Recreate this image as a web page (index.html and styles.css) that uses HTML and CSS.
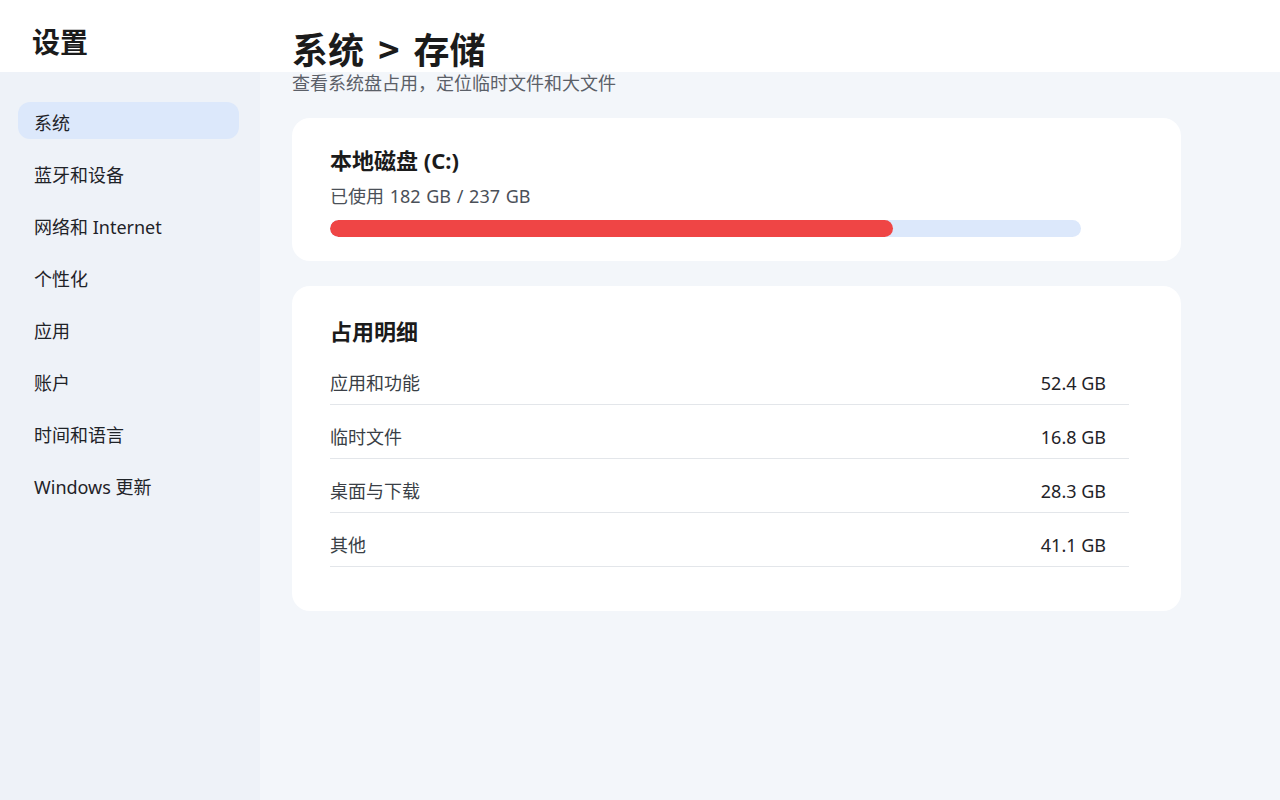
FILE: index.html
```html
<!DOCTYPE html>
<html lang="zh-CN">
<head>
<meta charset="utf-8">
<title>设置</title>
<link rel="stylesheet" href="styles.css">
</head>
<body>
<header class="topbar">
  <div class="brand">设置</div>
  <h1 class="page-title">系统 &gt; 存储</h1>
</header>
<div class="layout">
  <nav class="sidebar">
    <a class="nav-item active">系统</a>
    <a class="nav-item">蓝牙和设备</a>
    <a class="nav-item">网络和 Internet</a>
    <a class="nav-item">个性化</a>
    <a class="nav-item">应用</a>
    <a class="nav-item">账户</a>
    <a class="nav-item">时间和语言</a>
    <a class="nav-item">Windows 更新</a>
  </nav>
  <main class="main">
    <p class="subtitle">查看系统盘占用，定位临时文件和大文件</p>
    <section class="card disk-card">
      <h2 class="card-title">本地磁盘 (C:)</h2>
      <div class="usage">已使用 182 GB / 237 GB</div>
      <div class="track"><div class="fill" style="width:75%"></div></div>
    </section>
    <section class="card detail-card">
      <h2 class="card-title">占用明细</h2>
      <ul class="rows">
        <li class="row"><span class="label">应用和功能</span><span class="value">52.4 GB</span></li>
        <li class="row"><span class="label">临时文件</span><span class="value">16.8 GB</span></li>
        <li class="row"><span class="label">桌面与下载</span><span class="value">28.3 GB</span></li>
        <li class="row"><span class="label">其他</span><span class="value">41.1 GB</span></li>
      </ul>
    </section>
  </main>
</div>
</body>
</html>
```
FILE: styles.css
```css
* { box-sizing: border-box; }
html, body { margin: 0; padding: 0; height: 100%; }
body {
  font-family: "Noto Sans", "Noto Sans CJK SC", sans-serif;
  color: #1b1b1b;
  background: #f3f6fa;
  overflow: hidden;
}
.topbar {
  height: 72px;
  background: #ffffff;
  display: flex;
  align-items: flex-start;
}
.brand {
  width: 260px;
  padding-left: 32px;
  padding-top: 21px;
  font-family: "Noto Sans CJK SC", sans-serif;
  font-size: 28px;
  font-weight: 700;
  line-height: 40px;
}
.page-title {
  margin: 0 0 0 32px;
  padding-top: 28px;
  font-family: "Noto Sans CJK SC", sans-serif;
  font-size: 36px;
  font-weight: 700;
  line-height: 40px;
  word-spacing: 6px;
}
.layout {
  display: flex;
  height: calc(100% - 72px);
}
.sidebar {
  width: 260px;
  flex: none;
  background: #eef2f8;
  padding: 30px 21px 0 18px;
  display: flex;
  flex-direction: column;
  gap: 15px;
}
.nav-item {
  display: block;
  height: 37px;
  line-height: 43px;
  padding: 0 16px;
  border-radius: 12px;
  font-size: 18px;
  color: #1f2328;
}
.nav-item.active { background: #dce8fb; }
.main {
  flex: 1;
  padding: 0 32px;
  background: #f3f6fa;
}
.subtitle {
  margin: 0;
  font-size: 18px;
  line-height: 20px;
  height: 22px;
  color: #5b6068;
  font-family: "Noto Sans CJK SC", sans-serif;
}
.card {
  width: 889px;
  background: #ffffff;
  border-radius: 18px;
}
.disk-card {
  margin-top: 24px;
  padding: 27px 38px 24px;
}
.card-title {
  margin: 0;
  font-size: 22px;
  font-weight: 700;
  line-height: 30px;
}
.usage {
  margin-top: 8px;
  font-size: 18px;
  line-height: 26px;
  color: #4b5058;
  word-spacing: 1px;
}
.track {
  margin-top: 11px;
  width: 751px;
  height: 17px;
  border-radius: 9px;
  background: #dce8fb;
  overflow: hidden;
}
.fill {
  height: 100%;
  background: #ef4545;
  border-radius: 9px;
}
.detail-card {
  margin-top: 25px;
  padding: 30px 38px 44px;
}
.rows {
  list-style: none;
  margin: 5px 0 0;
  padding: 0;
  width: 799px;
}
.row {
  display: flex;
  justify-content: space-between;
  padding: 19px 23px 8px 0;
  border-bottom: 1px solid #e3e6ea;
  font-size: 18px;
  line-height: 26px;
}
.label { color: #3a3f46; }
.value { color: #1f2328; }
```
